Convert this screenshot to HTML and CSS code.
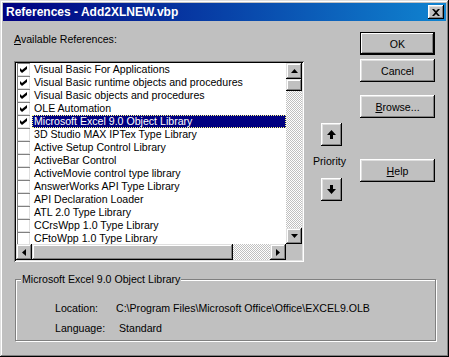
FILE: index.html
```html
<!DOCTYPE html>
<html lang="en">
<head>
  <meta charset="UTF-8" />
  <title>References - Add2XLNEW.vbp</title>
  <link rel="stylesheet" href="styles.css">
</head>
<body>

  <div class="window">
    <div class="titlebar">
      <span class="title">References - Add2XLNEW.vbp</span>
      <button class="close-btn" type="button">
        <svg width="8" height="7" viewBox="0 0 8 7"><path d="M0 0h2l2 2 2-2h2L5 3.5 8 7H6L4 5 2 7H0l3-3.5z" fill="#000"/></svg>
      </button>
    </div>

    <div class="main">
      <div class="left-col">
        <div class="label"><u>A</u>vailable References:</div>

        <div class="listbox">
          <div class="items" id="items"></div>

          <div class="vscroll">
            <div class="sb-btn">
              <svg width="7" height="4" viewBox="0 0 7 4"><path d="M3.5 0L7 4H0z" fill="#000"/></svg>
            </div>
            <div class="sb-thumb v"></div>
            <div class="sb-track"></div>
            <div class="sb-btn">
              <svg width="7" height="4" viewBox="0 0 7 4"><path d="M0 0h7L3.5 4z" fill="#000"/></svg>
            </div>
          </div>

          <div class="hscroll">
            <div class="sb-btn">
              <svg width="4" height="7" viewBox="0 0 4 7"><path d="M0 3.5L4 0v7z" fill="#000"/></svg>
            </div>
            <div class="sb-thumb h"></div>
            <div class="sb-track"></div>
            <div class="sb-btn">
              <svg width="4" height="7" viewBox="0 0 4 7"><path d="M0 0l4 3.5L0 7z" fill="#000"/></svg>
            </div>
          </div>

          <div class="sb-corner"></div>
        </div>
      </div>

      <div class="priority-col">
        <button class="arrow-btn up" type="button">
          <svg width="9" height="9" viewBox="0 0 9 9"><path d="M4.5 0L9 5H6v4H3V5H0z" fill="#000"/></svg>
        </button>
        <div class="priority-label">Priority</div>
        <button class="arrow-btn" type="button">
          <svg width="9" height="9" viewBox="0 0 9 9"><path d="M3 0h3v4h3L4.5 9 0 4h3z" fill="#000"/></svg>
        </button>
      </div>

      <div class="button-col">
        <button class="btn default" type="button">OK</button>
        <button class="btn cancel" type="button">Cancel</button>
        <button class="btn browse" type="button"><u>B</u>rowse...</button>
        <button class="btn help" type="button"><u>H</u>elp</button>
      </div>
    </div>

    <div class="groupbox">
      <div class="group-title">Microsoft Excel 9.0 Object Library</div>
      <div class="info-row location">
        <span class="info-label">Location:</span>
        <span>C:\Program Files\Microsoft Office\Office\EXCEL9.OLB</span>
      </div>
      <div class="info-row language">
        <span class="info-label">Language:</span>
        <span>Standard</span>
      </div>
    </div>
  </div>

  <script>
    var refs = [
      ['Visual Basic For Applications', true],
      ['Visual Basic runtime objects and procedures', true],
      ['Visual Basic objects and procedures', true],
      ['OLE Automation', true],
      ['Microsoft Excel 9.0 Object Library', true, true],
      ['3D Studio MAX IPTex Type Library', false],
      ['Active Setup Control Library', false],
      ['ActiveBar Control', false],
      ['ActiveMovie control type library', false],
      ['AnswerWorks API Type Library', false],
      ['API Declaration Loader', false],
      ['ATL 2.0 Type Library', false],
      ['CCrsWpp 1.0 Type Library', false],
      ['CFtoWpp 1.0 Type Library', false]
    ];

    var check = '<svg width="7" height="7" viewBox="0 0 7 7"><path d="M0 2l2 2 5-4v3L2 7 0 5z" fill="#000"/></svg>';
    var list = document.getElementById('items');

    refs.forEach(function (r) {
      var row = document.createElement('div');
      row.className = 'item';

      var box = document.createElement('span');
      box.className = 'checkbox';
      if (r[1]) box.innerHTML = check;
      row.appendChild(box);

      var text = document.createElement('span');
      text.className = r[2] ? 'item-text selected' : 'item-text';
      text.textContent = r[0];
      row.appendChild(text);

      list.appendChild(row);
    });
  </script>

</body>
</html>
```

FILE: styles.css
```css
:root {
  --face: #c0c0c0;
  --light: #dfdfdf;
  --shadow: #808080;
  --dark: #000;
  --highlight: #000080;
  --font: 'Liberation Sans', Arial, sans-serif;
}

* {
  margin: 0;
  padding: 0;
  box-sizing: border-box;
}

body {
  font-family: var(--font);
  font-size: 10.6px;
  line-height: 13px;
  color: #000;
  background: var(--face);
}

button {
  font-family: var(--font);
  font-size: 10.6px;
  color: #000;
  border: none;
  background: var(--face);
}

.window {
  width: 449px;
  height: 357px;
  padding: 3px;
  background: var(--face);
  box-shadow: inset -1px -1px var(--dark), inset 1px 1px var(--light),
              inset -2px -2px var(--shadow), inset 2px 2px #fff;
}

/* title bar */
.titlebar {
  height: 18px;
  display: flex;
  align-items: center;
  justify-content: space-between;
  padding: 0 2px 0 3px;
  background: linear-gradient(to right, #000080, #1084d0);
}

.title {
  color: #fff;
  font-weight: bold;
  font-size: 12px;
}

.close-btn {
  width: 16px;
  height: 14px;
  display: flex;
  align-items: center;
  justify-content: center;
  box-shadow: inset -1px -1px var(--dark), inset 1px 1px #fff,
              inset -2px -2px var(--shadow), inset 2px 2px var(--light);
}

/* main area */
.main {
  display: flex;
  padding: 11px 11px 0 11px;
}

.left-col {
  width: 290px;
  padding-top: 1px;
}

.label {
  height: 13px;
}

.listbox {
  margin-top: 15px;
  width: 290px;
  height: 201px;
  padding: 2px;
  background: #fff;
  display: grid;
  grid-template-columns: 1fr 16px;
  grid-template-rows: 1fr 16px;
  box-shadow: inset 1px 1px var(--shadow), inset -1px -1px #fff,
              inset 2px 2px var(--dark), inset -2px -2px var(--light);
}

.items {
  overflow: hidden;
}

.item {
  height: 13px;
  display: flex;
  align-items: center;
}

.checkbox {
  width: 13px;
  height: 13px;
  margin-left: 1px;
  display: flex;
  align-items: center;
  justify-content: center;
  background: #fff;
  box-shadow: inset 1px 1px var(--shadow), inset -1px -1px var(--light);
}

.item-text {
  flex: 1;
  margin-left: 2px;
  padding-left: 1px;
  height: 13px;
  white-space: nowrap;
  border: 1px solid transparent;
  line-height: 11px;
}

.item-text.selected {
  background: var(--highlight);
  color: #fff;
  border: 1px dotted #ffff7f;
}

/* scrollbars */
.vscroll {
  display: flex;
  flex-direction: column;
}

.hscroll {
  display: flex;
}

.sb-btn {
  width: 16px;
  height: 16px;
  flex: none;
  display: flex;
  align-items: center;
  justify-content: center;
  background: var(--face);
  box-shadow: inset -1px -1px var(--dark), inset 1px 1px var(--light),
              inset -2px -2px var(--shadow), inset 2px 2px #fff;
}

.sb-thumb {
  flex: none;
  background: var(--face);
  box-shadow: inset -1px -1px var(--dark), inset 1px 1px var(--light),
              inset -2px -2px var(--shadow), inset 2px 2px #fff;
}

.sb-thumb.v {
  height: 12px;
}

.sb-thumb.h {
  width: 201px;
}

.sb-track {
  flex: 1;
  background: repeating-conic-gradient(var(--face) 0 25%, #fff 0 50%) 0 0 / 2px 2px;
}

.sb-corner {
  background: var(--face);
}

/* priority arrows */
.priority-col {
  width: 54px;
  display: flex;
  flex-direction: column;
  align-items: center;
  padding-top: 91px;
}

.arrow-btn {
  width: 21px;
  height: 23px;
  display: flex;
  align-items: center;
  justify-content: center;
  box-shadow: inset -1px -1px var(--dark), inset 1px 1px #fff,
              inset -2px -2px var(--shadow), inset 2px 2px var(--light);
}

.priority-label {
  margin: 9px 3px 10px 0;
}

/* command buttons */
.button-col {
  margin-left: 2px;
  display: flex;
  flex-direction: column;
}

.btn {
  width: 75px;
  height: 23px;
  box-shadow: inset -1px -1px var(--dark), inset 1px 1px #fff,
              inset -2px -2px var(--shadow), inset 2px 2px var(--light);
}

.btn.default {
  border: 1px solid var(--dark);
  box-shadow: inset -1px -1px var(--dark), inset 1px 1px #fff,
              inset -2px -2px var(--shadow);
}

.btn.cancel {
  margin-top: 4px;
}

.btn.browse {
  margin-top: 13px;
}

.btn.help {
  margin-top: 41px;
}

/* info group */
.groupbox {
  margin: 17px 10px 0 12px;
  height: 62px;
  padding-left: 5px;
  border: 1px solid var(--shadow);
  box-shadow: 1px 1px 0 #fff, inset 1px 1px 0 #fff;
}

.group-title {
  display: inline-block;
  margin-top: -7px;
  padding: 0 1px;
  background: var(--face);
  vertical-align: top;
}

.info-row {
  display: flex;
  padding-left: 34px;
  margin-top: 7px;
}

.info-row.location {
  margin-top: 9px;
}

.info-label {
  width: 61px;
}

.language .info-label {
  width: 64px;
}
```
